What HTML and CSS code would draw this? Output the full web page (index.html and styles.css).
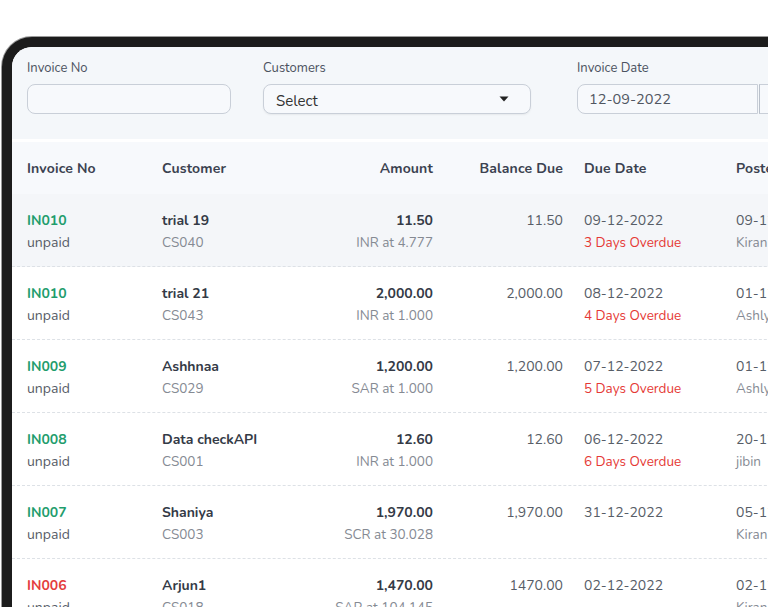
FILE: index.html
```html
<!DOCTYPE html>
<html>
<head>
<meta charset="utf-8">
<link rel="stylesheet" href="styles.css">
</head>
<body>
<div class="device">
  <div class="screen">
    <div class="filters">
      <div class="field f-no">
        <label class="lbl">Invoice No</label>
        <div class="input"></div>
      </div>
      <div class="field f-cust">
        <label class="lbl">Customers</label>
        <div class="input select"><span>Select</span><svg class="caret" width="10" height="6" viewBox="0 0 10 6"><path d="M0.5 0.5 L9.5 0.5 L5 5.5 Z" fill="#222"/></svg></div>
      </div>
      <div class="field f-date">
        <label class="lbl">Invoice Date</label>
        <div class="group">
          <div class="input date">12-09-2022</div>
          <div class="addon"></div>
        </div>
      </div>
    </div>
    <div class="table">
      <div class="row head">
        <div class="c c1">Invoice No</div>
        <div class="c c2">Customer</div>
        <div class="c c3 r">Amount</div>
        <div class="c c4 r">Balance Due</div>
        <div class="c c5">Due Date</div>
        <div class="c c6">Posted</div>
      </div>
      <div class="row hl">
        <div class="c c1"><div class="inv green">IN010</div><div class="sub dark">unpaid</div></div>
        <div class="c c2"><div class="name">trial 19</div><div class="sub">CS040</div></div>
        <div class="c c3 r"><div class="name">11.50</div><div class="sub">INR at 4.777</div></div>
        <div class="c c4 r"><div class="val">11.50</div></div>
        <div class="c c5"><div class="val">09-12-2022</div><div class="sub red">3 Days Overdue</div></div>
        <div class="c c6"><div class="val">09-12-2022</div><div class="sub">Kiran</div></div>
      </div>
      <div class="row">
        <div class="c c1"><div class="inv green">IN010</div><div class="sub dark">unpaid</div></div>
        <div class="c c2"><div class="name">trial 21</div><div class="sub">CS043</div></div>
        <div class="c c3 r"><div class="name">2,000.00</div><div class="sub">INR at 1.000</div></div>
        <div class="c c4 r"><div class="val">2,000.00</div></div>
        <div class="c c5"><div class="val">08-12-2022</div><div class="sub red">4 Days Overdue</div></div>
        <div class="c c6"><div class="val">01-12-2022</div><div class="sub">Ashly</div></div>
      </div>
      <div class="row">
        <div class="c c1"><div class="inv green">IN009</div><div class="sub dark">unpaid</div></div>
        <div class="c c2"><div class="name">Ashhnaa</div><div class="sub">CS029</div></div>
        <div class="c c3 r"><div class="name">1,200.00</div><div class="sub">SAR at 1.000</div></div>
        <div class="c c4 r"><div class="val">1,200.00</div></div>
        <div class="c c5"><div class="val">07-12-2022</div><div class="sub red">5 Days Overdue</div></div>
        <div class="c c6"><div class="val">01-12-2022</div><div class="sub">Ashly</div></div>
      </div>
      <div class="row">
        <div class="c c1"><div class="inv green">IN008</div><div class="sub dark">unpaid</div></div>
        <div class="c c2"><div class="name">Data checkAPI</div><div class="sub">CS001</div></div>
        <div class="c c3 r"><div class="name">12.60</div><div class="sub">INR at 1.000</div></div>
        <div class="c c4 r"><div class="val">12.60</div></div>
        <div class="c c5"><div class="val">06-12-2022</div><div class="sub red">6 Days Overdue</div></div>
        <div class="c c6"><div class="val">20-12-2022</div><div class="sub">jibin</div></div>
      </div>
      <div class="row">
        <div class="c c1"><div class="inv green">IN007</div><div class="sub dark">unpaid</div></div>
        <div class="c c2"><div class="name">Shaniya</div><div class="sub">CS003</div></div>
        <div class="c c3 r"><div class="name">1,970.00</div><div class="sub">SCR at 30.028</div></div>
        <div class="c c4 r"><div class="val">1,970.00</div></div>
        <div class="c c5"><div class="val">31-12-2022</div></div>
        <div class="c c6"><div class="val">05-12-2022</div><div class="sub">Kiran</div></div>
      </div>
      <div class="row">
        <div class="c c1"><div class="inv redinv">IN006</div><div class="sub dark">unpaid</div></div>
        <div class="c c2"><div class="name">Arjun1</div><div class="sub">CS018</div></div>
        <div class="c c3 r"><div class="name">1,470.00</div><div class="sub">SAR at 104.145</div></div>
        <div class="c c4 r"><div class="val">1470.00</div></div>
        <div class="c c5"><div class="val">02-12-2022</div></div>
        <div class="c c6"><div class="val">02-12-2022</div><div class="sub">Kiran</div></div>
      </div>
    </div>
  </div>
</div>
</body>
</html>
```

FILE: styles.css
```css
html, body {
  margin: 0;
  padding: 0;
  background: #ffffff;
  width: 768px;
  height: 607px;
  overflow: hidden;
  font-family: "Nunito", "Lato", "Open Sans", sans-serif;
}

.device {
  margin: 37px 0 0 2px;
  width: 820px;
  height: 640px;
  border: 10px solid #1c1c1c;
  border-radius: 30px 30px 0 0;
  box-shadow: 0 0 0 1px #9a9a9a;
  background: #1c1c1c;
}

.screen {
  width: 100%;
  height: 100%;
  background: #ffffff;
  border-radius: 20px 20px 0 0;
  overflow: hidden;
}

.filters {
  background: #f4f7fa;
  display: flex;
  padding: 13px 0 25px 15px;
  margin-bottom: 3px;
}

.field {
  display: flex;
  flex-direction: column;
  flex: none;
}

.f-no { width: 204px; margin-right: 32px; }
.f-cust { width: 268px; margin-right: 46px; }
.f-date { width: 260px; }

.lbl {
  font-size: 13px;
  line-height: 16px;
  color: #4b5260;
  margin-bottom: 8px;
}

.input {
  height: 28px;
  border: 1px solid #c9cfd8;
  border-radius: 8px;
  background: #f7f9fc;
  box-sizing: content-box;
  display: flex;
  align-items: center;
}

.select {
  padding: 0 21px 0 12px;
  justify-content: space-between;
  font-size: 15px;
  color: #333;
  box-shadow: 0 1px 2px rgba(0,0,0,0.06);
}

.select span { padding-top: 3px; }

.caret { display: block; }

.group { display: flex; }

.date {
  width: 168px;
  padding-left: 11px;
  font-size: 14.5px;
  color: #505661;
  border-radius: 8px 0 0 8px;
}

.addon {
  width: 60px;
  height: 28px;
  border: 1px solid #c9cfd8;
  border-left: 1px solid #b9c0ca;
  margin-left: 1px;
  background: #f7f9fc;
}

.table { background: #fff; }

.row {
  display: grid;
  grid-template-columns: 135px 150px 121px 130px 173px 150px;
  padding: 16px 0 12px 15px;
  border-bottom: 1px dashed #dde1e6;
}

.row.head {
  background: #f7f9fc;
  border-bottom: none;
  padding: 16px 0 14px 15px;
  font-weight: 700;
  font-size: 14px;
  line-height: 22px;
  color: #3b4250;
  letter-spacing: 0.15px;
}

.row.hl { background: #f4f6f9; }

.c { white-space: nowrap; }
.r { text-align: right; }
.c5 { padding-left: 21px; }

.inv, .name, .val {
  font-size: 14px;
  line-height: 22px;
}

.inv { font-weight: 700; }
.green { color: #1f9d6d; }
.redinv { color: #e43d3d; }

.name { font-weight: 700; color: #343a46; }
.val { color: #575d67; }

.sub {
  font-size: 13.5px;
  line-height: 22px;
  color: #858a93;
}

.sub.dark { color: #575d67; font-size: 14px; }
.sub.red { color: #e53935; }
```
